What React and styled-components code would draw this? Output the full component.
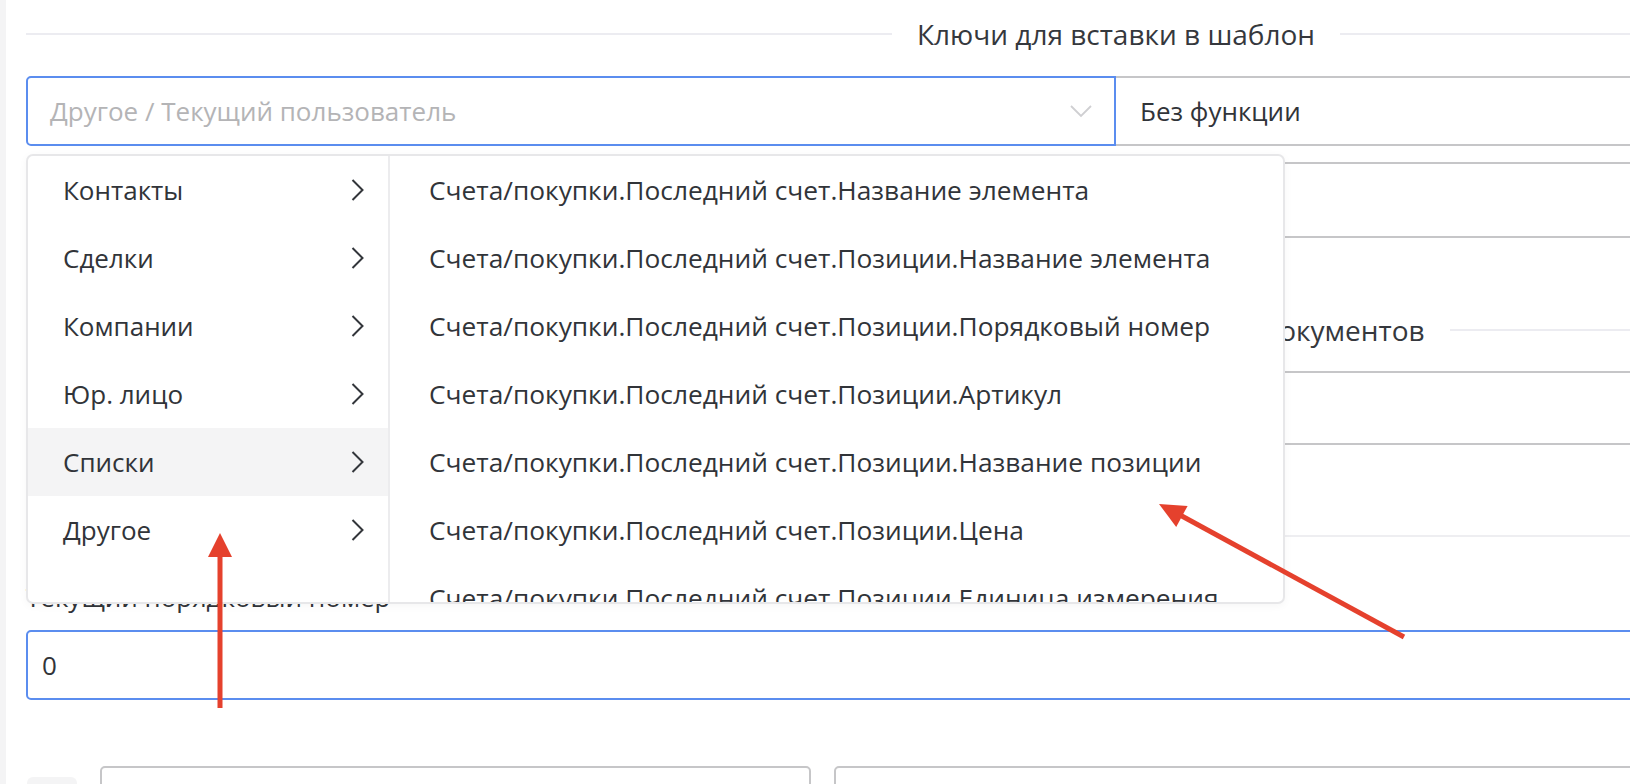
import React from "react";
import styled, { createGlobalStyle } from "styled-components";

const GlobalStyle = createGlobalStyle`
  html, body {
    margin: 0;
    padding: 0;
    background: #fff;
    overflow: hidden;
  }
  body {
    font-family: "Open Sans", "Noto Sans", sans-serif;
    color: #313439;
  }
  * { box-sizing: border-box; }
`;

const categories = ["Контакты", "Сделки", "Компании", "Юр. лицо", "Списки", "Другое"];

const keys = [
    "Счета/покупки.Последний счет.Название элемента",
    "Счета/покупки.Последний счет.Позиции.Название элемента",
    "Счета/покупки.Последний счет.Позиции.Порядковый номер",
    "Счета/покупки.Последний счет.Позиции.Артикул",
    "Счета/покупки.Последний счет.Позиции.Название позиции",
    "Счета/покупки.Последний счет.Позиции.Цена",
    "Счета/покупки.Последний счет.Позиции.Единица измерения",
    "Счета/покупки.Последний счет.Позиции.Количество",
];

const Page = styled.div`
    position: relative;
    display: flex;
    width: 100vw;
    height: 784px;
    overflow: hidden;
`;

const Rail = styled.div`
    width: 6px;
    flex-shrink: 0;
    background: #f4f4f5;
`;

// the form is wider than the window, its right part runs off screen
const Main = styled.div`
    flex-shrink: 0;
    width: 2200px;
    padding-left: 20px;
`;

const SectionTitle = styled.div`
    display: flex;
    align-items: center;
    gap: 25px;
    height: 68px;
    margin-top: ${(p) => p.$top || 0}px;
    font-size: 28px;
    color: #35383d;
    white-space: nowrap;

    &::before,
    &::after {
        content: "";
        flex: 1;
        height: 2px;
        background: #ececf1;
    }
`;

const FieldRow = styled.div`
    display: flex;
    height: 70px;
    margin-top: 8px;
`;

const SelectWrap = styled.div`
    position: relative;
    width: 50%;
    display: flex;
`;

const SelectBox = styled.div`
    flex: 1;
    display: flex;
    align-items: center;
    justify-content: space-between;
    padding: 0 22px 0 22px;
    border: 2px solid #5b8def;
    border-radius: 5px 0 0 5px;
    font-size: 26px;
    color: #b4b4b6;
`;

const Field = styled.div`
    display: flex;
    align-items: center;
    width: ${(p) => p.$width || "auto"};
    height: ${(p) => p.$height || 70}px;
    margin-top: ${(p) => p.$top || 0}px;
    padding-left: ${(p) => p.$pad || 24}px;
    border: 2px solid ${(p) => (p.$focus ? "#5b8def" : "#c6c6c8")};
    border-left-width: ${(p) => (p.$joined ? 0 : 2)}px;
    border-radius: ${(p) => (p.$joined ? 0 : 5)}px;
    font-size: 26px;
    color: #313439;
`;

const Divider = styled.div`
    height: 2px;
    margin-top: 90px;
    background: #eeeef1;
`;

const Label = styled.div`
    margin-top: 44px;
    font-size: 26px;
    line-height: 32px;
    color: #313439;
`;

const BottomRow = styled.div`
    display: flex;
    gap: 23px;
    margin-top: 66px;
`;

const Handle = styled.div`
    width: 50px;
    height: 50px;
    margin-top: 11px;
    margin-left: 1px;
    border-radius: 6px;
    background: #f4f4f5;
`;

const Menu = styled.div`
    position: absolute;
    top: calc(100% + 8px);
    left: 0;
    z-index: 10;
    display: flex;
    width: 1259px;
    height: 450px;
    background: #fff;
    border: 2px solid #e7e7e9;
    border-radius: 7px;
    box-shadow: 0 2px 8px rgba(0, 0, 0, 0.04);
    overflow: hidden;
`;

const CategoryList = styled.div`
    width: 362px;
    flex-shrink: 0;
    border-right: 2px solid #ececee;
`;

const Category = styled.div`
    display: flex;
    align-items: center;
    justify-content: space-between;
    height: 68px;
    padding: 0 24px 0 35px;
    font-size: 26px;
    color: #313439;
    background: ${(p) => (p.$active ? "#f4f4f5" : "transparent")};
`;

const KeyList = styled.div`
    flex: 1;
    overflow: hidden;
`;

const KeyItem = styled.div`
    display: flex;
    align-items: center;
    height: 68px;
    padding-left: 39px;
    font-size: 26.3px;
    color: #313439;
    white-space: nowrap;
`;

const Marks = styled.svg`
    position: absolute;
    top: 0;
    left: 0;
    z-index: 20;
    pointer-events: none;
`;

function ChevronDown() {
    return (
        <svg width="22" height="13" viewBox="0 0 22 13" fill="none">
            <polyline points="1,1 11,11 21,1" stroke="#cfcfd2" strokeWidth="1.8" />
        </svg>
    );
}

function ChevronRight() {
    return (
        <svg width="13" height="22" viewBox="0 0 13 22" fill="none">
            <polyline points="1.5,1 11.5,11 1.5,21" stroke="#33363b" strokeWidth="2" />
        </svg>
    );
}

function KeyPicker() {
    return (
        <SelectWrap>
            <SelectBox>
                Другое / Текущий пользователь
                <ChevronDown />
            </SelectBox>
            <Menu>
                <CategoryList>
                    {categories.map((name) => (
                        <Category key={name} $active={name === "Списки"}>
                            {name}
                            <ChevronRight />
                        </Category>
                    ))}
                </CategoryList>
                <KeyList>
                    {keys.map((k) => (
                        <KeyItem key={k}>{k}</KeyItem>
                    ))}
                </KeyList>
            </Menu>
        </SelectWrap>
    );
}

export default function App() {
    return (
        <>
            <GlobalStyle />
            <Page>
                <Rail />
                <Main>
                    <SectionTitle>Ключи для вставки в шаблон</SectionTitle>
                    <FieldRow>
                        <KeyPicker />
                        <Field $joined $width="50%">Без функции</Field>
                    </FieldRow>
                    <Field $top={16} $height={76} />
                    <SectionTitle $top={58}>Автоматическая нумерация всех документов</SectionTitle>
                    <Field $top={7} $height={74} />
                    <Divider />
                    <Label>Текущий порядковый номер</Label>
                    <Field $top={17} $focus $pad={14}>0</Field>
                    <BottomRow>
                        <Handle />
                        <Field $width="711px" />
                        <Field $width="1372px" />
                    </BottomRow>
                </Main>

                <Marks width="1630" height="784" viewBox="0 0 1630 784">
                    <line x1="220" y1="708" x2="220" y2="552" stroke="#e5412d" strokeWidth="5" />
                    <polygon points="220,533 208,557 232,557" fill="#e5412d" />
                    <line x1="1404" y1="637" x2="1180" y2="515" stroke="#e5412d" strokeWidth="5" />
                    <polygon points="1159,504 1187.6,505.9 1176.2,526.9" fill="#e5412d" />
                </Marks>
            </Page>
        </>
    );
}
